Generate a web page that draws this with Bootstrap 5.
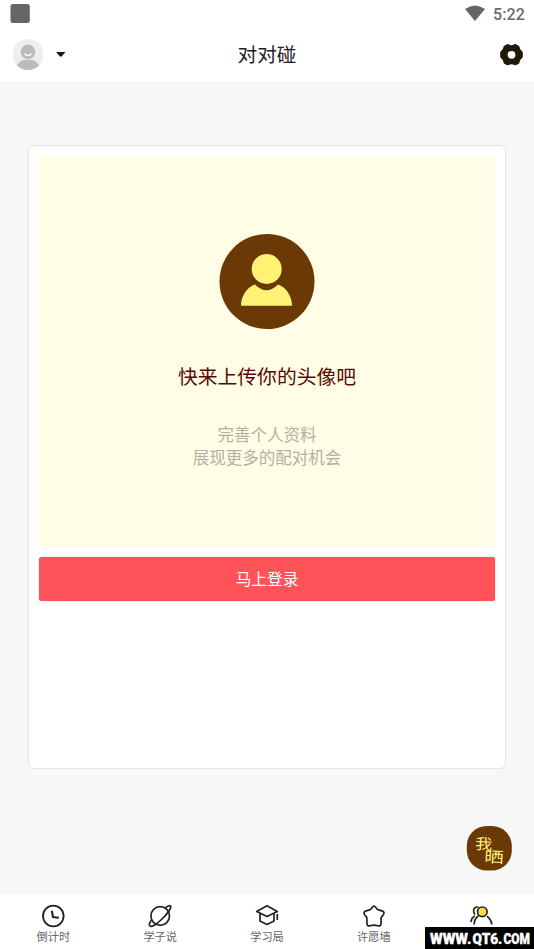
<!DOCTYPE html>
<html lang="zh-CN">
<head>
<meta charset="utf-8">
<meta name="viewport" content="width=device-width, initial-scale=1">
<title>对对碰</title>
<link href="https://cdn.jsdelivr.net/npm/bootstrap@5.3.0/dist/css/bootstrap.min.css" rel="stylesheet">
<style>
body{font-family:Roboto,"Noto Sans CJK SC",sans-serif;background:#f7f7f7;height:949px;overflow:hidden}
svg{display:block;flex:none}
.status-bar{height:28px;padding:0 9px 0 10px}
.clock-text{font-size:16px;line-height:28px;padding-top:1px;font-weight:500;color:#6b6b6b;letter-spacing:.1px}
.top-bar{height:53px;padding:0 10px 0 12px;grid-template-columns:1fr auto 1fr}
.page-title{font-size:19.7px;line-height:28px;color:#222;padding:2px 2px 0 0}
.content-area{padding:64px 28px 0}
.match-card{height:624px;padding:10px;border:1px solid #e6e6e6;border-radius:6px}
.upload-panel{height:390px;background:#fffde6;padding-top:78px}
.prompt-text{font-size:19.8px;line-height:28px;color:#570b05;margin-top:34px}
.hint-text{font-size:16.5px;line-height:22.5px;color:#b3b2a2;margin-top:33px}
.login-btn{height:44px;margin-top:11px;border:0;border-radius:3px;background:#ff5359;color:#fff;font-size:15.7px;line-height:22px;padding:2px 0 0;box-shadow:0 0 1px #a66}
.login-btn:hover{background:#f2494f;color:#fff}
.post-btn{right:22px;bottom:78px}
.tab-bar{height:55px}
.tab-item{padding-top:10px;color:#666;font-size:11.2px;line-height:15px}
.tab-item svg{margin-bottom:2px}
.site-mark{width:109px;height:22px;background:#000}
</style>
</head>
<body class="d-flex flex-column position-relative">
<div class="status-bar bg-white d-flex align-items-center justify-content-between">
  <svg width="20" height="28"><rect x=".5" y="4" width="19.3" height="19" rx="2.5" fill="#666"/></svg>
  <div class="d-flex align-items-center gap-2">
    <svg width="20" height="28"><path d="M0 9Q10 2 20 9L10 21Z" fill="#666"/></svg>
    <span class="clock-text">5:22</span>
  </div>
</div>
<header class="top-bar bg-white d-grid align-items-center">
  <div class="d-flex align-items-center">
    <svg width="32" height="32" viewBox="0 0 32 32"><defs><clipPath id="avatarClip"><circle cx="16" cy="15.500" r="15.500"/></clipPath></defs><circle cx="16" cy="15.500" r="15.500" fill="#eee"/><g clip-path="url(#avatarClip)" fill="#bbb"><circle cx="16" cy="12.800" r="7.300"/><path d="M3 30Q7 20 16 20T29 30V33H3Z"/></g><path d="M8 19.800Q16 22 24 19.800" stroke="#eee" stroke-width=".8" fill="none"/><path d="M12.500 14.500Q16 18.800 19.500 14.500" stroke="#fff" stroke-width="1.200" fill="none"/></svg>
    <svg class="ms-2" width="17" height="10"><path d="M4 2H13.500L10 6Q8.700 7.300 7.500 6Z" fill="#1d1b05"/></svg>
  </div>
  <h1 class="page-title fw-normal m-0">对对碰</h1>
  <svg class="ms-auto" width="25" height="25" viewBox="0 0 25 25"><path fill="#1d1b05" stroke="#1d1b05" stroke-width="3" stroke-linejoin="round" d="M8.800 3.600Q12.500 5.800 16.200 3.600L19 5Q19.200 8.500 22.300 10.600V14.800Q19.200 16.900 19 20.400L16.200 21.800Q12.500 19.600 8.800 21.800L6 20.400Q5.800 16.900 2.700 14.800V10.600Q5.800 8.500 6 5Z"/><circle cx="12.500" cy="12.800" r="3.900" fill="#fff"/></svg>
</header>
<main class="content-area flex-grow-1">
  <section class="match-card bg-white">
    <div class="upload-panel text-center">
      <svg class="mx-auto" width="96" height="96" viewBox="0 0 96 96"><circle cx="48" cy="47.500" r="47.500" fill="#6a3906"/><circle cx="47.700" cy="35" r="15" fill="#fff275"/><path d="M22 71.700C22 62 28 53 36 50.500Q47.500 62 59 50.500C67 53 73 62 73 71.700Z" fill="#fff275"/></svg>
      <div class="prompt-text">快来上传你的头像吧</div>
      <div class="hint-text">完善个人资料<br>展现更多的配对机会</div>
    </div>
    <button type="button" class="login-btn btn w-100 d-block">马上登录</button>
  </section>
</main>
<svg class="post-btn position-absolute" width="46" height="46" viewBox="0 0 46 46"><rect x=".8" y="1" width="45" height="44.500" rx="20" fill="#6a3906"/><g fill="#fff275" font-family="Noto Sans CJK SC,sans-serif"><text transform="translate(9 24) rotate(3) scale(1 .88)" font-size="17">我</text><text transform="translate(18 37) rotate(3) scale(1.08 .84)" font-size="18">晒</text></g></svg>
<nav class="tab-bar bg-white row row-cols-5 g-0 text-center">
  <div class="col tab-item d-flex flex-column align-items-center"><svg width="24" height="24" viewBox="0 0 24 24" fill="none" stroke="#222"><circle cx="12.300" cy="12" r="10.300" stroke-width="1.800"/><path d="M10.800 6.800L12 13L17.800 13.800" stroke-width="2"/></svg>倒计时</div>
  <div class="col tab-item d-flex flex-column align-items-center"><svg width="24" height="24" viewBox="0 0 24 24" fill="none" stroke="#222" stroke-width="1.700"><circle cx="12.200" cy="12" r="9.300"/><path d="M17 4.300C19.200 2 21.900 1 22.600 2.200C23.500 4 19 10 14 15C9 20 3.500 23.500 2 22C.8 20.800 1.700 18 4 15.500"/></svg>学子说</div>
  <div class="col tab-item d-flex flex-column align-items-center"><svg width="24" height="24" viewBox="0 0 24 24" fill="none" stroke="#222" stroke-width="1.700" stroke-linejoin="round"><path d="M1.700 7.500L12 1.800L22.300 7.500L12 12.600Z"/><path d="M5 9.500V17L12 20.500L19 17V9.500M22.300 10V16"/></svg>学习局</div>
  <div class="col tab-item d-flex flex-column align-items-center"><svg width="24" height="24" viewBox="0 0 24 24" fill="none" stroke="#222" stroke-width="1.700" stroke-linejoin="round"><path d="M10.200 3.400Q12 .7 13.800 3.400Q14.900 5.500 16.400 5.900L19.800 6.900Q23.300 8 21.300 10.800L19.600 12.900Q18.700 14 19.100 16V19Q19 22.700 15.800 21.700Q12 20.400 8.200 21.700Q5 22.700 4.900 19V16Q5.300 14 4.400 12.900L2.700 10.800Q.7 8 4.200 6.900L7.600 5.900Q9.100 5.500 10.200 3.400Z"/></svg>许愿墙</div>
  <div class="col tab-item d-flex flex-column align-items-center"><svg width="24" height="24" viewBox="0 0 24 24" fill="none" stroke="#222" stroke-width="1.700"><path d="M9.500 3.200Q5.500 2.200 4.600 6Q4.300 8.700 6 10.500M5.700 11.800Q2.500 14 1.800 18M9.500 11.800Q5.500 14.500 5 20.500M18 12.300Q22 15 22.800 20.500"/><circle cx="13.300" cy="7.800" r="4.800" fill="#ffd94f"/></svg></div>
</nav>
<div class="site-mark position-absolute bottom-0 end-0"><svg width="109" height="22" font-family="Roboto,sans-serif" font-size="15" font-weight="900" fill="#fff" stroke="#fff" stroke-width=".4"><g transform="translate(5 17) scale(.78 1)"><text textLength="53" lengthAdjust="spacingAndGlyphs">WWW.</text></g><g transform="translate(47.500 17) scale(.9 1)"><text textLength="33" lengthAdjust="spacingAndGlyphs">QT6.</text></g><g transform="translate(78.500 17) scale(.8 1)"><text textLength="33" lengthAdjust="spacingAndGlyphs">COM</text></g></svg></div>
<script src="https://cdn.jsdelivr.net/npm/bootstrap@5.3.0/dist/js/bootstrap.bundle.min.js"></script>
</body>
</html>
